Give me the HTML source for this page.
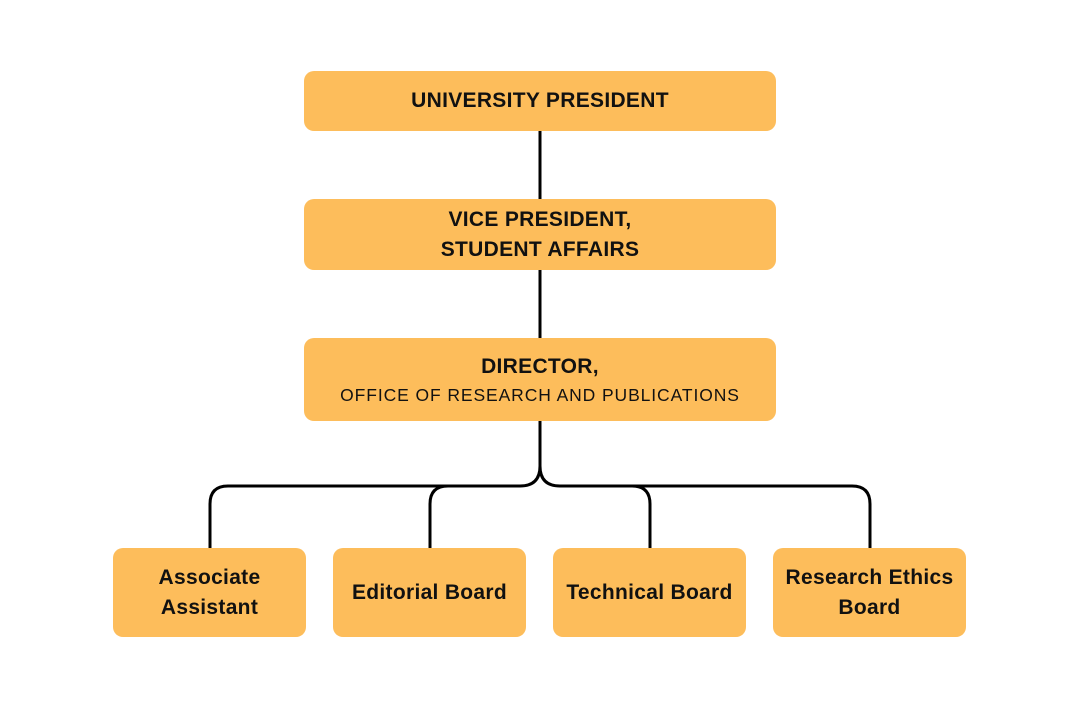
<!DOCTYPE html>
<html><head><style>
body{margin:0;width:1080px;height:709px;background:#fff;position:relative;overflow:hidden;font-family:"Liberation Sans",sans-serif;}
.b{position:absolute;background:#FDBD5B;border-radius:10px;display:flex;flex-direction:column;align-items:center;justify-content:center;text-align:center;color:#111;font-weight:bold;font-size:21px;letter-spacing:0.3px;line-height:30px;}
.s{font-weight:normal;font-size:17.5px;line-height:26px;letter-spacing:0.9px}
svg{position:absolute;left:0;top:0}
</style></head><body>
<svg width="1080" height="709"><g fill="none" stroke="#000" stroke-width="3">
<path d="M540 131V199M540 270V338M540 421V466"/>
<path d="M540 466Q540 486 520 486H228Q210 486 210 504V548"/>
<path d="M540 466Q540 486 560 486H852Q870 486 870 504V548"/>
<path d="M448 486Q430 486 430 504V548M632 486Q650 486 650 504V548"/>
</g></svg>
<div class="b" style="left:304px;top:71px;width:472px;height:60px">UNIVERSITY PRESIDENT</div>
<div class="b" style="left:304px;top:199px;width:472px;height:71px">VICE PRESIDENT,<br>STUDENT AFFAIRS</div>
<div class="b" style="left:304px;top:338px;width:472px;height:83px"><div>DIRECTOR,</div><div class="s">OFFICE OF RESEARCH AND PUBLICATIONS</div></div>
<div class="b" style="left:113px;top:548px;width:193px;height:89px">Associate<br>Assistant</div>
<div class="b" style="left:333px;top:548px;width:193px;height:89px">Editorial Board</div>
<div class="b" style="left:553px;top:548px;width:193px;height:89px">Technical Board</div>
<div class="b" style="left:773px;top:548px;width:193px;height:89px">Research Ethics<br>Board</div>
</body></html>
